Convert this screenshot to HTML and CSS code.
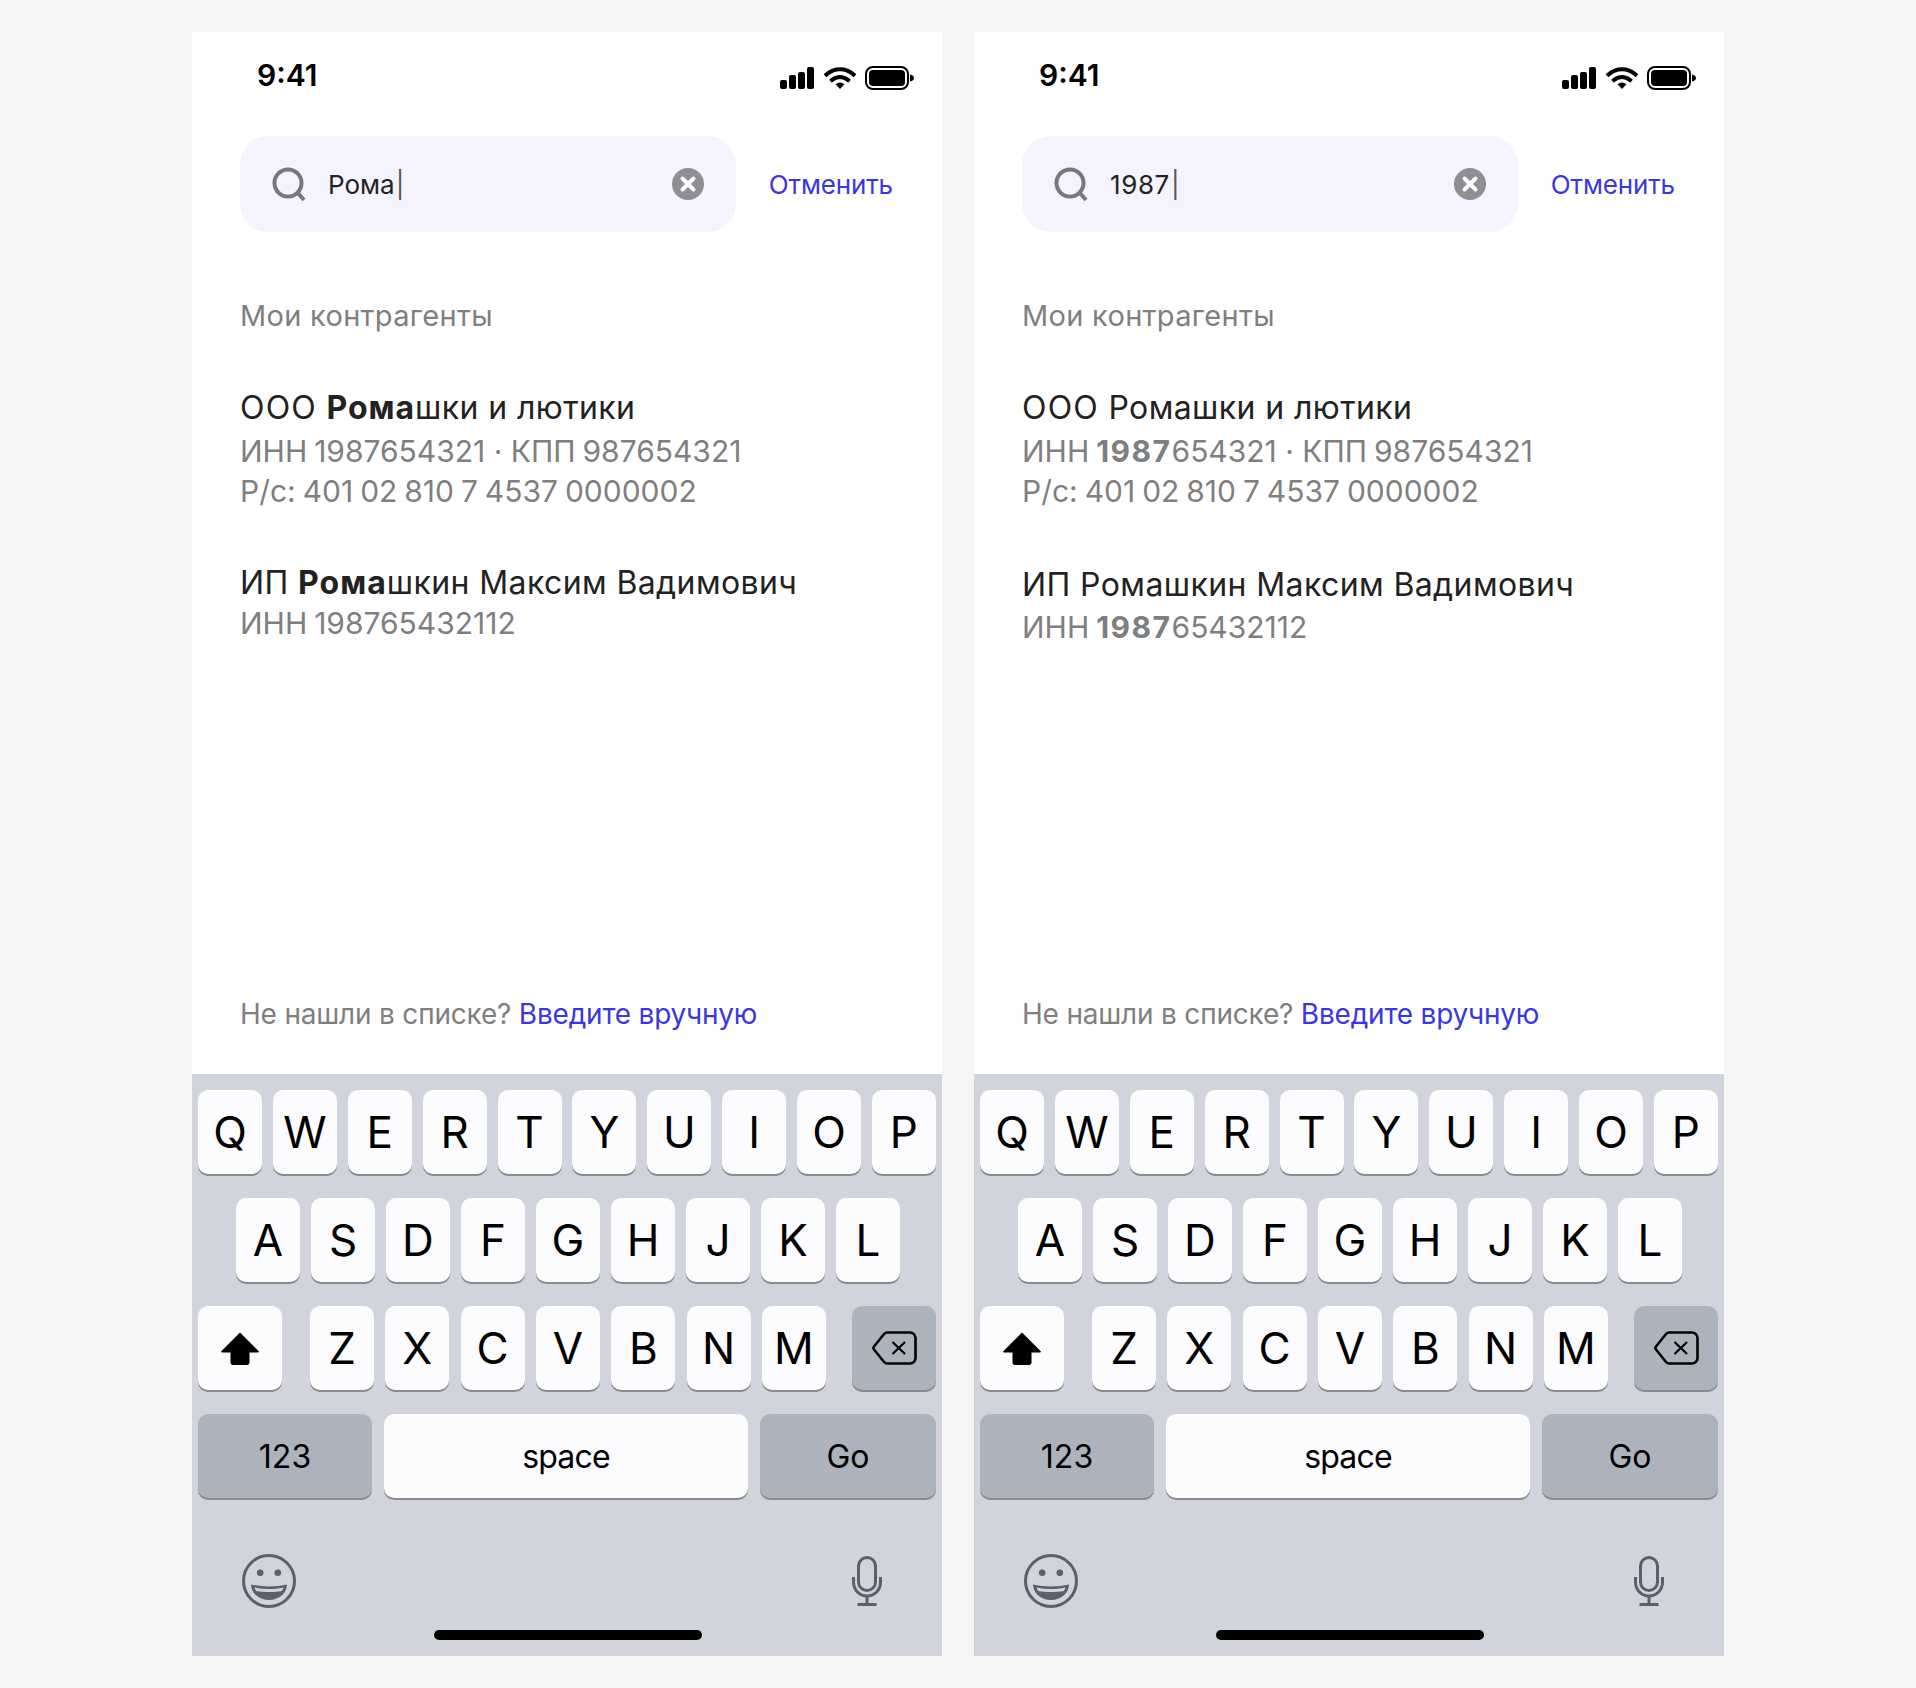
FILE: index.html
```html
<!DOCTYPE html>
<html lang="ru">

<head>
    <meta charset="UTF-8">
    <meta name="viewport" content="width=device-width, initial-scale=1.0">
    <title>Поиск контрагента</title>
    <link rel="stylesheet" href="styles.css">
</head>

<body>
    <!-- shared icons -->
    <svg class="sprite" aria-hidden="true">
        <symbol id="status-icons" viewBox="0 0 134 24">
            <rect x="0" y="14" width="7" height="9" rx="2" />
            <rect x="9" y="9" width="7" height="14" rx="2" />
            <rect x="18" y="6" width="7" height="17" rx="2" />
            <rect x="27" y="1" width="7" height="22" rx="2" />
            <path d="M46.5 8.5A20 20 0 0 1 73.5 8.5" fill="none" stroke="#000" stroke-width="4" stroke-linecap="square" />
            <path d="M52 14A12 12 0 0 1 68 14" fill="none" stroke="#000" stroke-width="4" stroke-linecap="square" />
            <path d="M55.5 18.2A7 7 0 0 1 64.5 18.2L60 23Z" />
            <rect x="86" y="1" width="42" height="22" rx="7" fill="none" stroke="#000" stroke-width="2" />
            <rect x="89" y="4" width="36" height="16" rx="4" />
            <path d="M130 8.5C132.500 9 134 10.300 134 12C134 13.700 132.500 15 130 15.500Z" />
        </symbol>
        <symbol id="search" viewBox="0 0 36 36">
            <circle cx="17" cy="17" r="13.500" fill="none" stroke="#77777d" stroke-width="4" />
            <path d="M26.500 26.500L33 34" fill="none" stroke="#77777d" stroke-width="4" />
        </symbol>
        <symbol id="clear" viewBox="0 0 32 32">
            <circle cx="16" cy="16" r="16" fill="#8e8e93" />
            <path d="M10.500 10.500L21.500 21.500M21.500 10.500L10.500 21.500" fill="none" stroke="#fff" stroke-width="4" stroke-linecap="round" />
        </symbol>
        <symbol id="shift" viewBox="0 0 38 33">
            <path d="M19 0.500L37.500 19C38.300 19.900 37.800 20.500 36.800 20.500H28.500V30.500C28.500 32 27.500 33 26 33H12C10.500 33 9.500 32 9.500 30.500V20.500H1.200C0.200 20.500 -0.300 19.900 0.500 19Z" />
        </symbol>
        <symbol id="backspace" viewBox="0 0 45 34">
            <path d="M15 1.500H38C41 1.500 43.500 4 43.500 7V27C43.500 30 41 32.500 38 32.500H15C14 32.500 13 32 12.200 31.200L2 18.500C1.200 17.500 1.200 16.500 2 15.500L12.200 2.800C13 2 14 1.500 15 1.500Z" fill="none" stroke="#000" stroke-width="2.600" />
            <path d="M20.500 11L33 23M33 11L20.500 23" fill="none" stroke="#000" stroke-width="2.200" />
        </symbol>
        <symbol id="emoji" viewBox="0 0 54 54">
            <circle cx="27" cy="27" r="25.500" fill="none" stroke="#5b5f6a" stroke-width="3" />
            <circle cx="18.200" cy="18.700" r="3.300" fill="#5b5f6a" />
            <circle cx="35.800" cy="18.700" r="3.300" fill="#5b5f6a" />
            <path d="M9 30.500C20 33 34 33 45 30.500C45 39 37 46 27 46C17 46 9 39 9 30.500Z" fill="#5b5f6a" />
            <path d="M12.500 33.500C22 35.500 32 35.500 41.500 33.500C41 35 40.500 36 39.800 37C32 38.300 22 38.300 14.200 37C13.500 36 13 35 12.500 33.500Z" fill="#d1d4dc" />
        </symbol>
        <symbol id="mic" viewBox="0 0 30 50">
            <rect x="6.500" y="1.500" width="17" height="33" rx="8.500" fill="none" stroke="#5b5f6a" stroke-width="3" />
            <path d="M1.500 21V26C1.500 34 7.500 40 15 40C22.500 40 28.500 34 28.500 26V21" fill="none" stroke="#5b5f6a" stroke-width="3" />
            <path d="M15 40V48.500M5.500 48.500H24.500" fill="none" stroke="#5b5f6a" stroke-width="3" />
        </symbol>
    </svg>

    <div class="screens">
        <!-- первый экран: поиск по названию -->
        <section class="phone">
            <div class="status">
                <span class="time">9:41</span>
                <svg class="status-icons"><use href="#status-icons" /></svg>
            </div>
            <div class="search-row">
                <div class="search">
                    <svg class="search-icon"><use href="#search" /></svg>
                    <span class="search-text">Рома<span class="cursor">|</span></span>
                    <svg class="clear-icon"><use href="#clear" /></svg>
                </div>
                <a class="cancel">Отменить</a>
            </div>
            <main class="content">
                <h2 class="label">Мои контрагенты</h2>
                <div class="item">
                    <div class="item-title"><span class="org">ООО</span> <b>Рома</b>шки и лютики</div>
                    <div class="item-sub">ИНН 1987654321 <span class="dot">·</span> КПП 987654321</div>
                    <div class="item-sub">Р/с: 401 02 810 7 4537 0000002</div>
                </div>
                <div class="item item-tight">
                    <div class="item-title">ИП <b>Рома</b>шкин Максим Вадимович</div>
                    <div class="item-sub">ИНН 198765432112</div>
                </div>
                <p class="hint">Не нашли в списке? <a class="hint-link">Введите вручную</a></p>
            </main>
            <div class="keyboard">
                <div class="kb-row">
                    <div class="key">Q</div><div class="key">W</div><div class="key">E</div><div class="key">R</div><div class="key">T</div>
                    <div class="key">Y</div><div class="key">U</div><div class="key">I</div><div class="key">O</div><div class="key">P</div>
                </div>
                <div class="kb-row kb-row-middle">
                    <div class="key">A</div><div class="key">S</div><div class="key">D</div><div class="key">F</div><div class="key">G</div>
                    <div class="key">H</div><div class="key">J</div><div class="key">K</div><div class="key">L</div>
                </div>
                <div class="kb-row">
                    <div class="key key-wide"><svg class="shift-icon"><use href="#shift" /></svg></div>
                    <div class="kb-letters">
                        <div class="key">Z</div><div class="key">X</div><div class="key">C</div><div class="key">V</div>
                        <div class="key">B</div><div class="key">N</div><div class="key">M</div>
                    </div>
                    <div class="key key-wide key-gray"><svg class="backspace-icon"><use href="#backspace" /></svg></div>
                </div>
                <div class="kb-row">
                    <div class="key key-small key-gray key-num">123</div>
                    <div class="key key-small key-space">space</div>
                    <div class="key key-small key-gray key-go">Go</div>
                </div>
                <div class="kb-tools">
                    <svg class="emoji-icon"><use href="#emoji" /></svg>
                    <svg class="mic-icon"><use href="#mic" /></svg>
                </div>
                <div class="home-bar"></div>
            </div>
        </section>

        <!-- второй экран: поиск по ИНН -->
        <section class="phone">
            <div class="status">
                <span class="time">9:41</span>
                <svg class="status-icons"><use href="#status-icons" /></svg>
            </div>
            <div class="search-row">
                <div class="search">
                    <svg class="search-icon"><use href="#search" /></svg>
                    <span class="search-text search-digits">1987<span class="cursor">|</span></span>
                    <svg class="clear-icon"><use href="#clear" /></svg>
                </div>
                <a class="cancel">Отменить</a>
            </div>
            <main class="content">
                <h2 class="label">Мои контрагенты</h2>
                <div class="item">
                    <div class="item-title"><span class="org">ООО</span> Ромашки и лютики</div>
                    <div class="item-sub">ИНН <b>1987</b>654321 <span class="dot">·</span> КПП 987654321</div>
                    <div class="item-sub">Р/с: 401 02 810 7 4537 0000002</div>
                </div>
                <div class="item item-shifted">
                    <div class="item-title">ИП Ромашкин Максим Вадимович</div>
                    <div class="item-sub">ИНН <b>1987</b>65432112</div>
                </div>
                <p class="hint">Не нашли в списке? <a class="hint-link">Введите вручную</a></p>
            </main>
            <div class="keyboard">
                <div class="kb-row">
                    <div class="key">Q</div><div class="key">W</div><div class="key">E</div><div class="key">R</div><div class="key">T</div>
                    <div class="key">Y</div><div class="key">U</div><div class="key">I</div><div class="key">O</div><div class="key">P</div>
                </div>
                <div class="kb-row kb-row-middle">
                    <div class="key">A</div><div class="key">S</div><div class="key">D</div><div class="key">F</div><div class="key">G</div>
                    <div class="key">H</div><div class="key">J</div><div class="key">K</div><div class="key">L</div>
                </div>
                <div class="kb-row">
                    <div class="key key-wide"><svg class="shift-icon"><use href="#shift" /></svg></div>
                    <div class="kb-letters">
                        <div class="key">Z</div><div class="key">X</div><div class="key">C</div><div class="key">V</div>
                        <div class="key">B</div><div class="key">N</div><div class="key">M</div>
                    </div>
                    <div class="key key-wide key-gray"><svg class="backspace-icon"><use href="#backspace" /></svg></div>
                </div>
                <div class="kb-row">
                    <div class="key key-small key-gray key-num">123</div>
                    <div class="key key-small key-space">space</div>
                    <div class="key key-small key-gray key-go">Go</div>
                </div>
                <div class="kb-tools">
                    <svg class="emoji-icon"><use href="#emoji" /></svg>
                    <svg class="mic-icon"><use href="#mic" /></svg>
                </div>
                <div class="home-bar"></div>
            </div>
        </section>
    </div>
</body>

</html>
```

FILE: styles.css
```css
body {
    margin: 0;
    background-color: #f5f5f5;
    font-family: Inter, "Noto Sans", sans-serif;
    color: #222;
}

.sprite {
    display: none;
}

.screens {
    display: flex;
    justify-content: center;
    gap: 32px;
    padding-top: 32px;
}

.phone {
    display: flex;
    flex-direction: column;
    width: 750px;
    height: 1624px;
    background-color: #fff;
}

/* status bar */
.status {
    display: flex;
    justify-content: space-between;
    padding: 24px 28px 0 65px;
}

.time {
    font-size: 30px;
    font-weight: 600;
    line-height: 38px;
    color: #000;
}

.status-icons {
    width: 134px;
    height: 24px;
    margin-top: 10px;
}

/* search */
.search-row {
    display: flex;
    align-items: center;
    padding: 0 49px 0 48px;
    margin-top: 42px;
}

.search {
    display: flex;
    flex: 1;
    align-items: center;
    height: 96px;
    padding: 0 32px 0 31px;
    background-color: #f4f3fe;
    border-radius: 28px;
}

.search-icon {
    width: 36px;
    height: 36px;
}

.search-text {
    flex: 1;
    margin-left: 21px;
    font-size: 26px;
}

.search-digits {
    letter-spacing: 0.6px;
}

.cursor {
    margin-left: 1px;
    color: #555;
}

.clear-icon {
    width: 32px;
    height: 32px;
}

.cancel {
    margin-left: 33px;
    font-size: 26px;
    letter-spacing: -0.15px;
    color: #3b37e0;
}

/* list */
.content {
    display: flex;
    flex: 1;
    flex-direction: column;
    padding: 0 48px;
}

.label {
    margin: 66px 0 34px;
    font-size: 29px;
    font-weight: 400;
    letter-spacing: 0.3px;
    line-height: 36px;
    color: #7f7f7f;
}

.item {
    margin-top: 20px;
    margin-bottom: 32px;
}

.item-title {
    font-size: 32px;
    letter-spacing: 0.4px;
    line-height: 40px;
    margin-bottom: 3px;
}

.item-title b {
    letter-spacing: 1px;
}

.org {
    letter-spacing: 1.200px;
}

.item-sub {
    font-size: 30px;
    word-spacing: -1.5px;
    line-height: 40px;
    color: #7f7f7f;
}

.item-sub b {
    letter-spacing: 1.5px;
}

.dot {
    margin: 0 1.5px;
}

.item-tight .item-title {
    margin-bottom: 0;
}

.item-shifted {
    margin-top: 22px;
}

.item-shifted .item-title {
    margin-bottom: 2px;
}

.hint {
    margin: auto 0 42px;
    font-size: 28px;
    letter-spacing: -0.2px;
    line-height: 36px;
    color: #7f7f7f;
}

.hint-link {
    color: #3b37e0;
}

/* keyboard */
.keyboard {
    height: 582px;
    box-sizing: border-box;
    padding: 16px 6px 0;
    background-color: #d1d4dc;
}

.kb-row {
    display: flex;
    justify-content: space-between;
    margin-bottom: 24px;
}

.kb-row-middle {
    padding: 0 36px 0 38px;
}

.kb-letters {
    display: flex;
    flex: 1;
    justify-content: space-between;
    margin: 0 26px 0 28px;
}

.key {
    display: flex;
    align-items: center;
    justify-content: center;
    width: 64px;
    height: 84px;
    background-color: #fcfcfe;
    border-radius: 10px;
    box-shadow: 0 2px 0 #898a8d;
    font-size: 44px;
    color: #000;
}

.key-wide {
    width: 84px;
}

.key-gray {
    background-color: #adb3bc;
}

.key-small {
    font-size: 32px;
}

.key-num {
    width: 174px;
}

.key-space {
    width: 364px;
    letter-spacing: -0.8px;
}

.key-go {
    width: 176px;
}

.shift-icon {
    width: 38px;
    height: 33px;
}

.backspace-icon {
    width: 45px;
    height: 34px;
}

.kb-tools {
    display: flex;
    justify-content: space-between;
    padding: 0 54px 0 44px;
    margin-top: 56px;
}

.emoji-icon {
    width: 54px;
    height: 54px;
}

.mic-icon {
    width: 30px;
    height: 50px;
    margin-top: 2px;
}

.home-bar {
    width: 268px;
    height: 10px;
    margin: 22px 0 0 236px;
    background-color: #000;
    border-radius: 5px;
}
```
